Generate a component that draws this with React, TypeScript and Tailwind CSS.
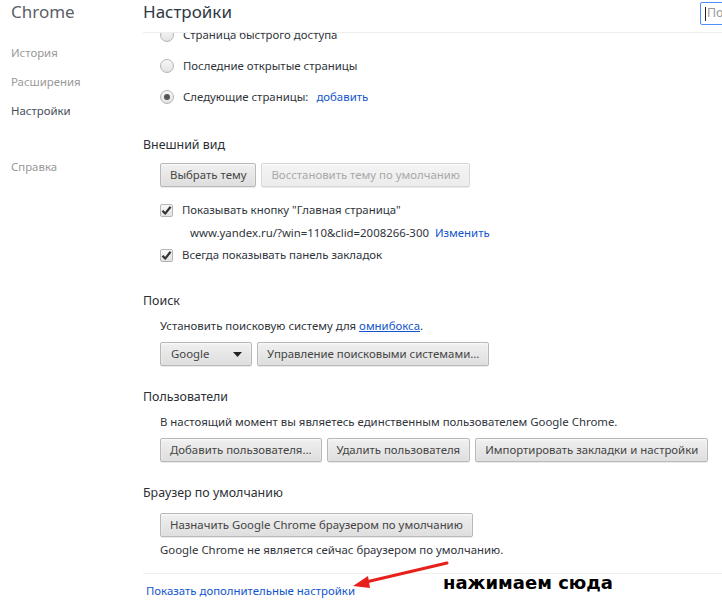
import type { ReactNode } from 'react'

const font = { fontFamily: '"Noto Sans", "Open Sans", sans-serif' }

function Btn({ children, disabled, className = '' }: { children: ReactNode; disabled?: boolean; className?: string }) {
  return (
    <button
      className={
        'h-[24px] px-[9px] rounded-[2px] border whitespace-nowrap text-[11.4px] leading-none bg-gradient-to-b shadow-[0_1px_0_rgba(0,0,0,0.08),inset_0_1px_2px_rgba(255,255,255,0.75)] ' +
        (disabled
          ? 'border-[#d6d6d6] from-[#f4f4f4] to-[#ececec] text-[#a8a8a8] '
          : 'border-[#b8b8b8] from-[#f0f0f0] to-[#dedede] text-[#444] ') +
        className
      }
    >
      {children}
    </button>
  )
}

function Radio({ checked }: { checked?: boolean }) {
  return (
    <span className="w-[14px] h-[14px] rounded-full border border-[#b5b5b5] bg-gradient-to-b from-[#f8f8f8] to-[#e2e2e2] flex items-center justify-center shrink-0">
      {checked && <span className="w-[6px] h-[6px] rounded-full bg-[#555]" />}
    </span>
  )
}

function Checkbox() {
  return (
    <span className="w-[13px] h-[13px] rounded-[2px] border border-[#b5b5b5] bg-gradient-to-b from-[#f8f8f8] to-[#e2e2e2] flex items-center justify-center shrink-0">
      <svg width="11" height="11" viewBox="0 0 11 11">
        <path d="M1.5 5.8 L4.2 8.6 L9.6 1.8" fill="none" stroke="#333" strokeWidth="2.2" strokeLinejoin="round" />
      </svg>
    </span>
  )
}

function Heading({ children, className = '' }: { children: ReactNode; className?: string }) {
  return <div className={'h-[20px] flex items-center text-[12.4px] text-[#2b2f35] ' + className}>{children}</div>
}

export default function App() {
  return (
    <div className="w-[722px] h-[615px] bg-white flex overflow-hidden text-[#2f343b] relative" style={font}>
      {/* Sidebar */}
      <div className="w-[143px] shrink-0 pl-[11px]">
        <div className="h-[24px] flex items-center text-[17px] text-[#5c6166]">Chrome</div>
        <div className="mt-[14px] flex flex-col text-[11.4px]">
          <div className="h-[29px] flex items-center text-[#999]">История</div>
          <div className="h-[29px] flex items-center text-[#999]">Расширения</div>
          <div className="h-[29px] flex items-center text-[#464e5a]">Настройки</div>
          <div className="h-[29px] mt-[27px] flex items-center text-[#999]">Справка</div>
        </div>
      </div>

      {/* Main */}
      <div className="flex-1 min-w-0 flex flex-col overflow-hidden">
        <div className="h-[33px] shrink-0 border-b border-[#eee] flex items-start relative z-10 bg-white">
          <div className="w-[557px] shrink-0 h-[24px] flex items-center text-[17px] text-[#303942]">Настройки</div>
          <div className="w-[160px] shrink-0 h-[23px] mt-[2px] border border-[#4d90fe] rounded-[2px] flex items-center pl-[4px] text-[12.4px] text-[#999] whitespace-nowrap">
            <span className="w-px h-[14px] bg-[#222] mr-[1px]" />
            Поиск
          </div>
        </div>

        <div className="flex-1 overflow-hidden">
          <div className="-mt-[14px] pl-[17px]">
            {[
              { label: 'Страница быстрого доступа' },
              { label: 'Последние открытые страницы' },
              { label: 'Следующие страницы:', checked: true, link: 'добавить' },
            ].map((r) => (
              <div key={r.label} className="h-[31px] flex items-center gap-[9px] text-[11.4px]">
                <Radio checked={r.checked} />
                <span>{r.label}</span>
                {r.link && <span className="text-[#15c] -ml-[1px]">{r.link}</span>}
              </div>
            ))}
          </div>

          {/* Внешний вид */}
          <Heading className="mt-[23px]">Внешний вид</Heading>
          <div className="pl-[17px] mt-[8px] flex gap-[5px]">
            <Btn>Выбрать тему</Btn>
            <Btn disabled>Восстановить тему по умолчанию</Btn>
          </div>
          <div className="pl-[17px] mt-[12px] text-[11.4px]">
            <div className="h-[22px] flex items-center gap-[9px]">
              <Checkbox />
              <span>Показывать кнопку "Главная страница"</span>
            </div>
            <div className="h-[23px] flex items-center pl-[30px] gap-[6px]">
              <span>www.yandex.ru/?win=110&amp;clid=2008266-300</span>
              <span className="text-[#15c]">Изменить</span>
            </div>
            <div className="h-[22px] flex items-center gap-[9px]">
              <Checkbox />
              <span>Всегда показывать панель закладок</span>
            </div>
          </div>

          {/* Поиск */}
          <Heading className="mt-[25px]">Поиск</Heading>
          <div className="pl-[17px] mt-[5px] text-[11.4px]">
            <div className="h-[20px] flex items-center">
              Установить поисковую систему для&nbsp;<span className="text-[#15c] underline">омнибокса</span>.
            </div>
            <div className="mt-[6px] flex gap-[5px]">
              <Btn className="w-[92px] flex items-center justify-between">
                <span className="pl-[1px]">Google</span>
                <svg width="9" height="5" viewBox="0 0 9 5">
                  <path d="M0 0 H9 L4.5 5 Z" fill="#222" />
                </svg>
              </Btn>
              <Btn>Управление поисковыми системами...</Btn>
            </div>
          </div>

          {/* Пользователи */}
          <Heading className="mt-[21px]">Пользователи</Heading>
          <div className="pl-[17px] mt-[5px] text-[11.4px]">
            <div className="h-[20px] flex items-center">
              В настоящий момент вы являетесь единственным пользователем Google Chrome.
            </div>
            <div className="mt-[6px] flex gap-[5px]">
              <Btn>Добавить пользователя...</Btn>
              <Btn>Удалить пользователя</Btn>
              <Btn>Импортировать закладки и настройки</Btn>
            </div>
          </div>

          {/* Браузер по умолчанию */}
          <Heading className="mt-[21px]">Браузер по умолчанию</Heading>
          <div className="pl-[17px] mt-[10px] text-[11.4px]">
            <Btn>Назначить Google Chrome браузером по умолчанию</Btn>
            <div className="h-[20px] mt-[3px] flex items-center">
              Google Chrome не является сейчас браузером по умолчанию.
            </div>
          </div>

          <div className="mt-[13px] border-t border-[#eee]" />
          <div className="mt-[7px] pl-[3px] h-[20px] flex items-center text-[11.4px] text-[#15c]">
            Показать дополнительные настройки
          </div>
        </div>
      </div>

      {/* Annotation */}
      <svg className="absolute left-0 top-0 pointer-events-none" width="722" height="615">
        <line x1="447" y1="563" x2="366" y2="582" stroke="#e8201c" strokeWidth="3" strokeLinecap="round" />
        <path d="M353 586 L368 576 L370 588 Z" fill="#e8201c" />
      </svg>
      <div
        className="absolute left-[443px] top-[574px] text-[18px] font-bold text-black leading-none"
        style={{ fontFamily: '"DejaVu Sans", Verdana, sans-serif' }}
      >
        нажимаем сюда
      </div>
    </div>
  )
}
